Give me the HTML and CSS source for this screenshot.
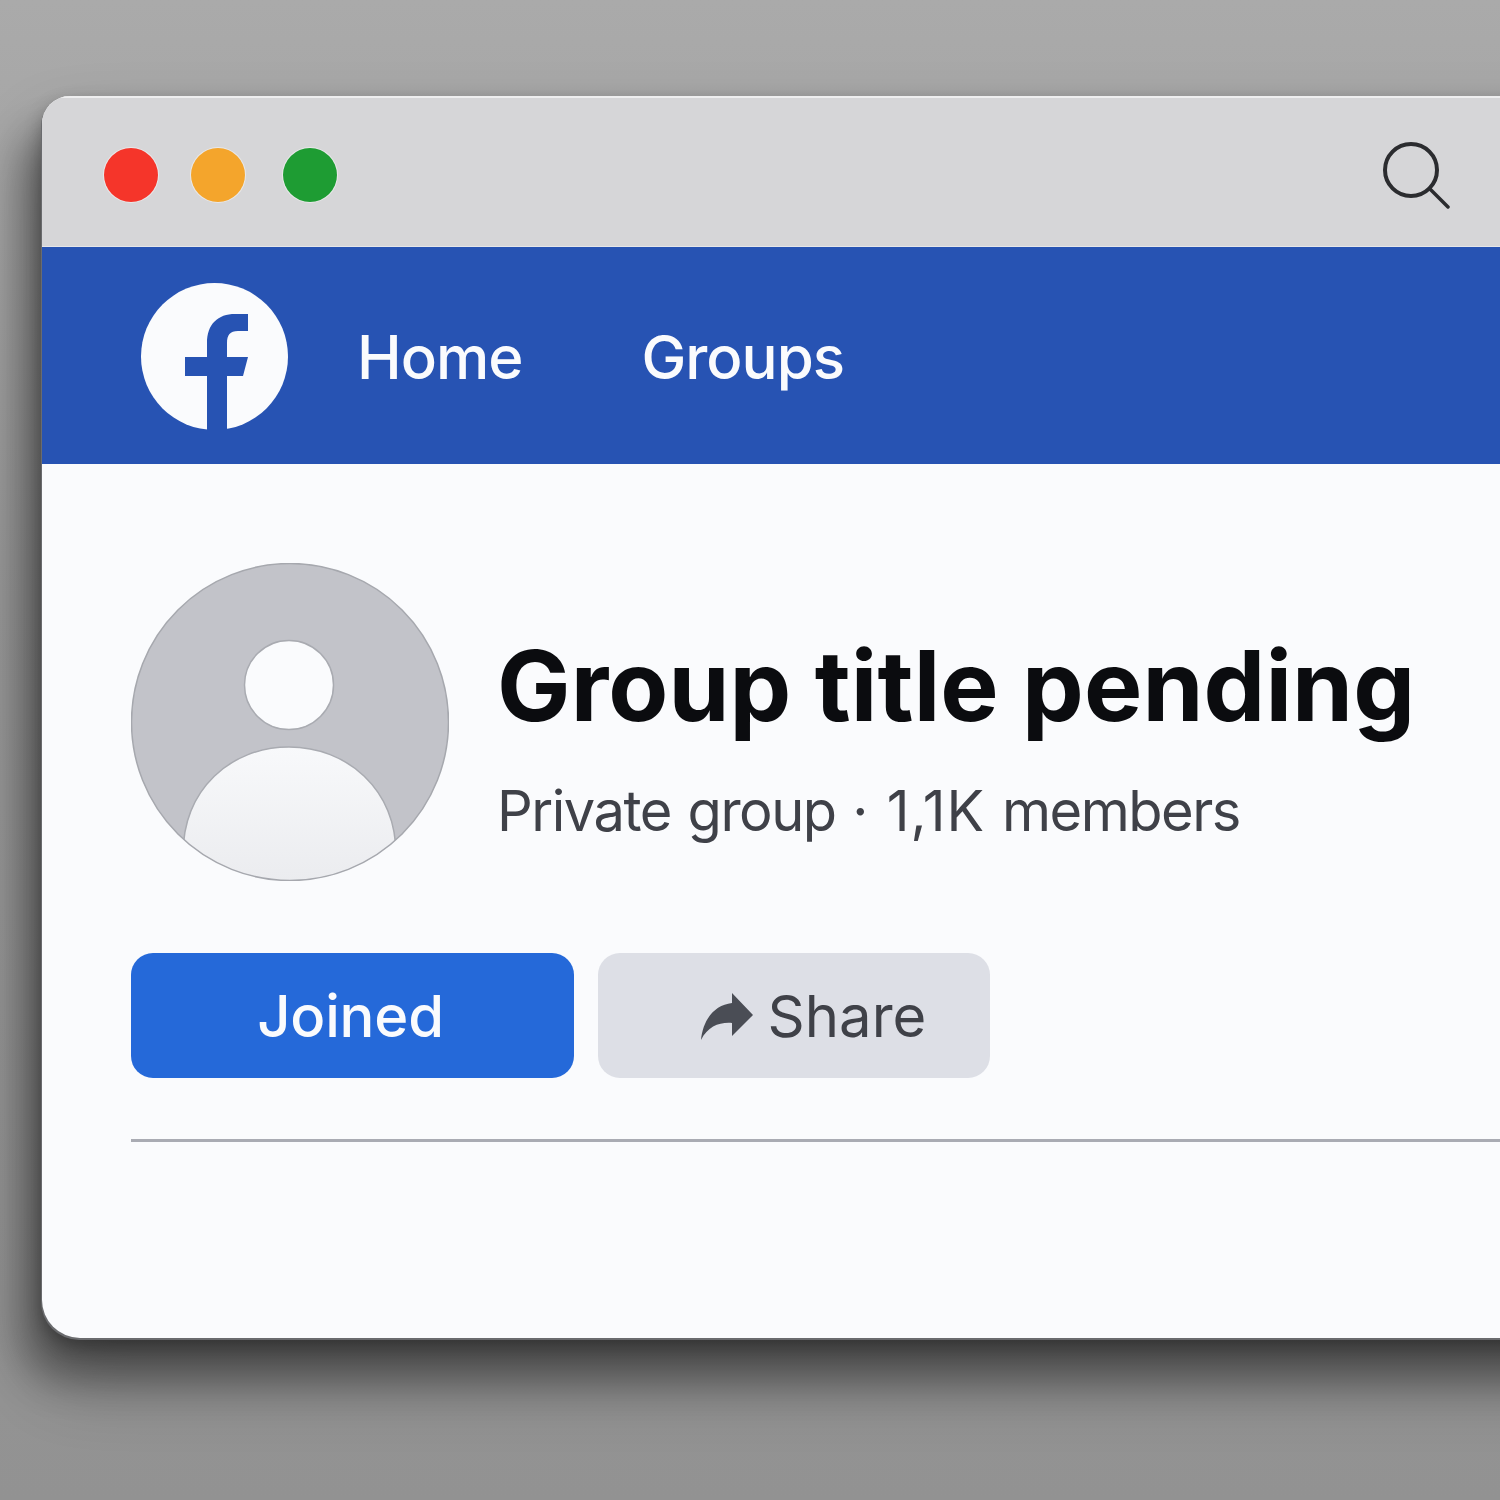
FILE: index.html
```html
<!DOCTYPE html>
<html lang="en">
<head>
  <meta charset="UTF-8" />
  <title>Group page</title>
  <link rel="stylesheet" href="styles.css">
</head>
<body>
  <div class="window">
    <div class="titlebar">
      <span class="dot dot-red"></span>
      <span class="dot dot-orange"></span>
      <span class="dot dot-green"></span>
      <svg class="search-icon" width="70" height="70" viewBox="0 0 70 70" fill="none" stroke="#2b2c2f" stroke-width="4" stroke-linecap="round">
        <circle cx="31" cy="30" r="26" />
        <path d="M49.5 48.5 L68 67" stroke-width="3.5" />
      </svg>
    </div>

    <nav class="navbar">
      <svg class="logo" width="148" height="148" viewBox="0 0 148 148">
        <circle cx="73.5" cy="73.5" r="73.5" fill="#fafbfd" />
        <path fill="#2753b3" d="M66 148 V93 H44 V74 H66 V60 C66 41 77 31 94 31 H107 V48 H97 C89 48 86 52 86 60 V74 H107 L102 93 H86 V148 Z" />
      </svg>
      <a class="nav-link nav-home">Home</a>
      <a class="nav-link">Groups</a>
    </nav>

    <main class="content">
      <section class="group-header">
        <svg class="avatar" width="318" height="318" viewBox="0 0 318 318">
          <defs>
            <clipPath id="avatar-clip"><circle cx="159" cy="159" r="158.5" /></clipPath>
            <linearGradient id="body-fill" x1="0" y1="0" x2="0" y2="1">
              <stop offset="0" stop-color="#f8f9fb" />
              <stop offset="1" stop-color="#ebecef" />
            </linearGradient>
          </defs>
          <circle cx="159" cy="159" r="158.5" fill="#c2c3c9" />
          <g clip-path="url(#avatar-clip)">
            <path d="M52 318 V292 C52 226 100 184 158 184 C216 184 265 226 265 292 V318 Z" fill="url(#body-fill)" stroke="#a9abb1" stroke-width="1.5" />
          </g>
          <circle cx="158" cy="122" r="44.5" fill="#fafbfd" stroke="#a9abb1" stroke-width="1.5" />
          <circle cx="159" cy="159" r="158.5" fill="none" stroke="#a6a8ae" stroke-width="1.5" />
        </svg>
        <div class="group-info">
          <h1 class="group-title">Group title pending</h1>
          <p class="group-meta">Private group · <span class="member-count">1,1K</span> members</p>
        </div>
      </section>

      <div class="actions">
        <button class="btn btn-joined">Joined</button>
        <button class="btn btn-share">
          <svg class="share-icon" width="54" height="48" viewBox="0 0 54 48">
            <path fill="#4a4d55" d="M1 48 C3 28 14 13 32 11 V1 L53 23 L32 44 V31 C20 30 8 34 1 48 Z" />
          </svg>
          Share
        </button>
      </div>

      <hr class="divider">
    </main>
  </div>
</body>
</html>
```

FILE: styles.css
```css
html, body {
  margin: 0;
  height: 1500px;
  overflow: hidden;
}

body {
  padding: 96px 0 0 42px;
  box-sizing: border-box;
  background: linear-gradient(180deg, #aaaaaa 0%, #9b9b9b 40%, #929292 100%);
  font-family: Inter, "Liberation Sans", sans-serif;
}

.window {
  width: 1600px;
  height: 1242px;
  border-radius: 28px 0 0 38px;
  background-color: #fafbfd;
  overflow: hidden;
  box-shadow:
    -1px 2px 0 #6a6b6e,
    0 8px 18px rgba(0, 0, 0, 0.3),
    -20px 40px 40px rgba(0, 0, 0, 0.32),
    0 40px 70px rgba(0, 0, 0, 0.32);
}

/* title bar */
.titlebar {
  height: 151px;
  box-sizing: border-box;
  display: flex;
  align-items: center;
  padding: 6px 0 0 62px;
  background-color: #d6d6d8;
  border-top: 2px solid #eeeeef;
  border-bottom: 1px solid #e6e6e8;
}

.dot {
  width: 54px;
  height: 54px;
  border-radius: 50%;
  box-shadow: 0 0 0 1px rgba(255, 255, 255, 0.45);
}
.dot-red { background-color: #f5352a; }
.dot-orange { background-color: #f4a52c; margin-left: 33px; }
.dot-green { background-color: #1e9c33; margin-left: 38px; }

.search-icon {
  margin-left: 1043px;
}

/* nav */
.navbar {
  height: 217px;
  box-sizing: border-box;
  display: flex;
  align-items: center;
  padding: 2px 0 0 99px;
  background-color: #2753b3;
}

.nav-link {
  font-size: 60px;
  font-weight: 500;
  letter-spacing: -1px;
  color: #fafbfd;
}
.nav-home { margin-left: 68px; margin-right: 119px; }

/* content */
.content {
  padding: 99px 0 0 89px;
}

.group-header {
  display: flex;
  align-items: center;
  gap: 48px;
}

.group-info {
  padding-top: 27px;
}

.group-title {
  margin: 0;
  font-size: 98px;
  font-weight: 700;
  letter-spacing: 0.1px;
  line-height: 120px;
  color: #0b0c0f;
}

.group-meta {
  margin: 31px 0 0;
  font-size: 56px;
  line-height: 68px;
  letter-spacing: -1.5px;
  word-spacing: 2.5px;
  color: #3f4148;
}

.member-count {
  margin-left: 3px;
  letter-spacing: 1px;
}

.actions {
  display: flex;
  gap: 24px;
  margin-top: 72px;
}

.btn {
  height: 125px;
  border: none;
  border-radius: 22px;
  display: flex;
  align-items: center;
  justify-content: center;
  font-family: inherit;
  font-size: 58px;
  font-weight: 500;
  letter-spacing: -0.2px;
}

.btn-joined {
  width: 443px;
  padding: 0 4px 0 0;
  background-color: #2569d9;
  color: #fafbfd;
}

.btn-share {
  width: 392px;
  gap: 14px;
  padding: 0 7px 0 45px;
  background-color: #dddfe6;
  color: #3f4148;
  font-weight: 400;
  letter-spacing: 0;
}

.divider {
  margin: 61px 0 0;
  border: none;
  height: 3px;
  background-color: #a9abb3;
}
```
